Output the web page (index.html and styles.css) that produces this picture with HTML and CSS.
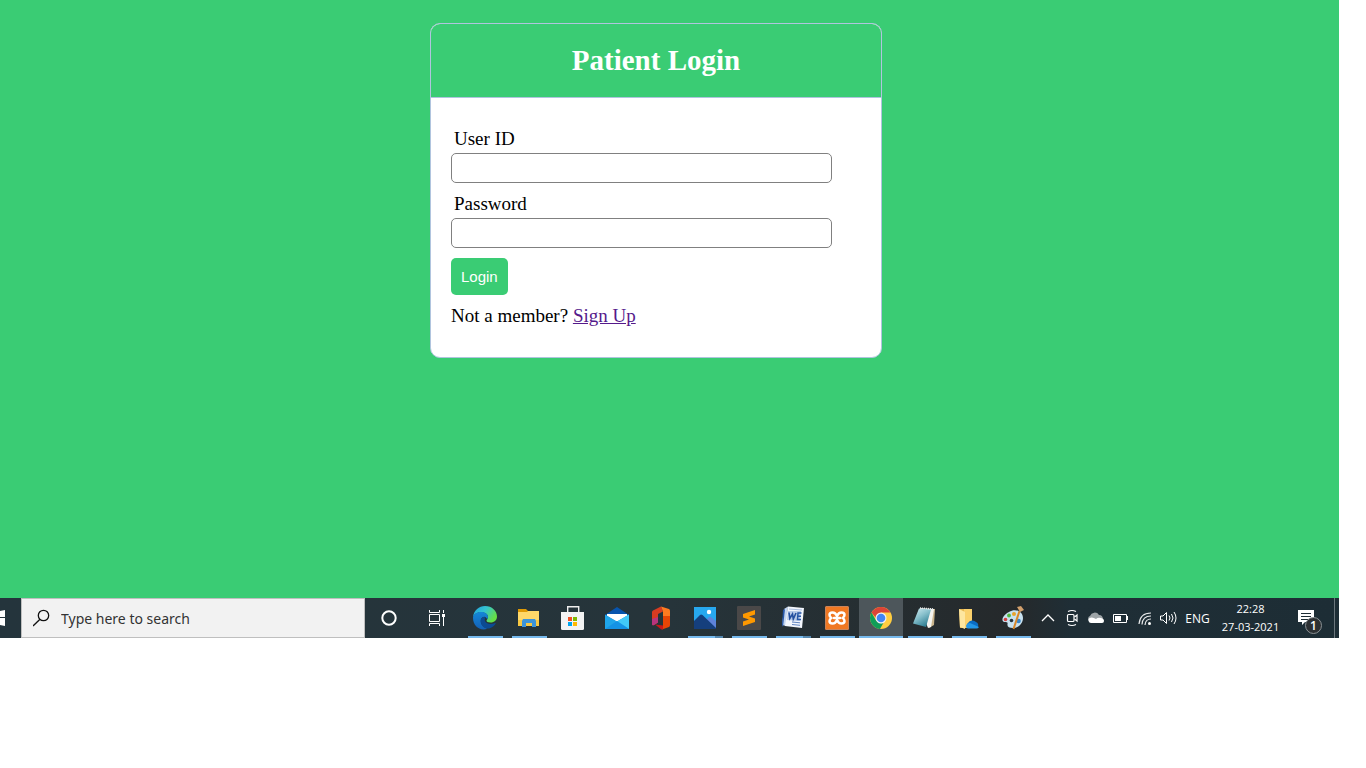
FILE: index.html
```html
<!DOCTYPE html>
<html lang="en">
<head>
<meta charset="utf-8">
<meta name="viewport" content="width=device-width, initial-scale=1">
<title>Patient Login</title>
<link rel="stylesheet" href="styles.css">
</head>
<body>
<div class="screen">
  <main class="page">
    <section class="card">
      <header class="card-header"><h1>Patient Login</h1></header>
      <form class="login-form">
        <div class="field">
          <label for="user-id">User ID</label>
          <input type="text" id="user-id" name="user-id">
        </div>
        <div class="field">
          <label for="password">Password</label>
          <input type="password" id="password" name="password">
        </div>
        <button class="login-button" type="submit">Login</button>
        <p class="signup">Not a member? <a href="#signup">Sign Up</a></p>
      </form>
    </section>
  </main>

  <footer class="taskbar">
    <button class="start" aria-label="Start">
      <svg width="21" height="40" viewBox="0 0 21 40"><path fill="#fff" d="M0 13l5-1v7H0zM0 20h5v8l-5-1z"/></svg>
    </button>
    <div class="search">
      <svg width="18" height="18" viewBox="0 0 18 18" fill="none" stroke="#111" stroke-width="1.3"><circle cx="10.500" cy="6.500" r="5.200"/><path d="M7 10.200L0 17"/></svg>
      <input type="text" aria-label="Search" placeholder="Type here to search">
    </div>
    <button class="shell" aria-label="Cortana">
      <svg width="24" height="24" viewBox="0 0 24 24"><circle cx="12" cy="12" r="6.700" fill="none" stroke="#fff" stroke-width="2"/></svg>
    </button>
    <button class="shell" aria-label="Task View">
      <svg width="24" height="24" viewBox="0 0 24 24" fill="none" stroke="#fff"><path d="M4.500 8.500h10v7h-10zM4.500 4v2.500h10V4M4.500 20v-2.500h10V20M18.500 4v3M18.500 11v9"/><path fill="#fff" stroke="none" d="M17 8h3v3h-3z"/></svg>
    </button>
    <nav class="apps" aria-label="Applications">
      <button class="app open" aria-label="Edge">
        <svg width="24" height="24" viewBox="0 0 24 24">
          <defs>
            <linearGradient id="edge-top" x1="0" y1="0" x2="1" y2=".5"><stop offset="0" stop-color="#1f9fe0"/><stop offset=".5" stop-color="#35c4d0"/><stop offset="1" stop-color="#66df45"/></linearGradient>
            <linearGradient id="edge-low" x1="0" y1="0" x2="0" y2="1"><stop offset="0" stop-color="#1487d8"/><stop offset="1" stop-color="#1460b5"/></linearGradient>
          </defs>
          <path fill="url(#edge-top)" d="M0 11C1 4 6 0 12 0c7 0 12 5 12 10.500 0 3.500-2.500 6-6.500 6-3 0-4-1-4-2 0-.8 1.500-1.400 1.500-3.500 0-3-3-4.800-7-4.800C4 6.200 1 8 0 11z"/>
          <path fill="url(#edge-low)" d="M0 12c0-3.500 3.500-6 8-6 4 0 7 2 7 5 0 1-.4 1.700-.9 2.300C13.500 11.500 12 10.500 10.500 11 7 12 7 16.500 9.500 19.500c1.200 1.500 3 2.700 5 3.200C7 25.500 0 20 0 12z"/>
          <path fill="#0c4a92" d="M9.800 11.200C6.500 13 7.500 18 10 20.500c2 2 5 2.700 7.500 1.500 2-.8 4-2.500 5.200-4.500.3-.5-.2-.8-.7-.5-4.500 2.300-9.500.5-10.200-2.500-.2-1.200.1-2 .7-2.700-.8-.8-1.800-1-2.700-.6z"/>
        </svg>
      </button>
      <button class="app open" aria-label="File Explorer">
        <svg width="24" height="24" viewBox="0 0 24 24"><path fill="#e09a05" d="M1 3h8l2 2h10v3H1z"/><path fill="#ffd869" d="M1 6h9l1-1h11v15H1z"/><path fill="#f8c842" d="M1 14h21v6H1z"/><path fill="#3c94d9" d="M5 15l1-2h12l1 2v6h-4v-4H9v4H5z"/></svg>
      </button>
      <button class="app" aria-label="Store">
        <svg width="24" height="24" viewBox="0 0 24 24"><path fill="none" stroke="#eee" stroke-width="1.400" d="M6.700 7V.8h11V7"/><path fill="#f3f3f3" d="M0 6h23v16.500q0 1.500-1.500 1.500h-20Q0 24 0 22.500z"/><path fill="#f25022" d="M7 11h4v4H7z"/><path fill="#7fba00" d="M12 11h4v4h-4z"/><path fill="#00a4ef" d="M7 16h4v4H7z"/><path fill="#ffb900" d="M12 16h4v4h-4z"/></svg>
      </button>
      <button class="app" aria-label="Mail">
        <svg width="24" height="24" viewBox="0 0 24 24"><path fill="#0754ad" d="M0 9L12 1l12 8v5H0z"/><path fill="#fff" d="M2 8h20v2l-10 6L2 10z"/><path fill="#1fa5ea" d="M0 8.500l12 7 12-7V23H0z"/><path fill="#41c9f7" d="M24 8.500V23L12 15.500z"/><path fill="#1593e5" d="M0 23l12-8 12 8z"/></svg>
      </button>
      <button class="app" aria-label="Office">
        <svg width="24" height="24" viewBox="0 0 24 24"><path fill="#d83b21" d="M3 6q0-1 1-1.600L12 .5l2 5L9 8v8.500L5 19q-2 1-2-1z"/><path fill="#b8347e" d="M3 13l6-2v5.500L5 19q-2 1-2-1z"/><path fill="#ff7a20" d="M12 .5L20 3q1 .5 1 2v7h-7V5.500z"/><path fill="#e84505" d="M14 10h7v9q0 1.500-1 2l-7 2.500 1-4z"/><path fill="#c91818" d="M6 18.500l8 1v3.800q-1 .4-2 0z"/></svg>
      </button>
      <button class="app open grouped" aria-label="Photos">
        <svg width="24" height="24" viewBox="0 0 24 24"><path fill="#27a8ef" d="M1 1h22v22H1z"/><path fill="#5e83da" d="M10 17l6-6q1-1 2 0l5 4v8H10z"/><path fill="#153f7d" d="M1 15l6-6q1-1 2.500 0L23 22v1H1z"/><circle cx="16" cy="6" r="2.200" fill="#fff"/></svg>
      </button>
      <button class="app open" aria-label="Sublime Text">
        <svg width="24" height="24" viewBox="0 0 24 24"><rect width="24" height="24" rx="1" fill="#4a4848"/><path fill="#ff9800" d="M6 8l12-4v4.500l-6 2 6 2V16L6 20v-4.500l6-2-6-2z"/></svg>
      </button>
      <button class="app open grouped" aria-label="Word">
        <svg width="24" height="24" viewBox="0 0 24 24"><path fill="#c3d5f0" d="M3 3L7 .5 5 20l-4-1z"/><path fill="#f3f7fd" d="M7 .5L23 2l-2 20L4 20z"/><path fill="#2858a8" d="M2 4l2-1-2 18-1-2z"/><path fill="#b9cbe8" d="M7 5h13l-1 10-13-1z"/><path fill="none" stroke="#2450a0" stroke-width="1.600" d="M8 6.500l.8 6 2.700-4.500.8 5L15 7"/><path fill="none" stroke="#2858a8" stroke-width="1.500" d="M20.500 7H17l-.5 6.500H20M17 10.300h3"/><path stroke="#5f84c0" d="M11 16l8 .8M11 18.500l8 .8"/><path stroke="#a9bee0" d="M8 3l13 1"/></svg>
      </button>
      <button class="app open" aria-label="XAMPP">
        <svg width="24" height="24" viewBox="0 0 24 24"><rect width="24" height="24" rx="1.500" fill="#f07822"/><rect x=".5" y=".5" width="23" height="23" rx="1.500" fill="none" stroke="#c9845a"/><path fill="none" stroke="#fff" stroke-width="2.500" stroke-linecap="round" stroke-linejoin="round" d="M12 10Q10.500 6.500 7.500 6.500 4.500 6.500 4.500 9q0 2 2 3-2 1-2 3 0 2.500 3 2.500 3 0 4.500-3.500 1.500 3.500 4.500 3.500t3-2.500q0-2-2-3 2-1 2-3 0-2.500-3-2.500-3 0-4.500 3.500zM9 12h6"/></svg>
      </button>
      <button class="app open active" aria-label="Chrome">
        <svg width="24" height="24" viewBox="0 0 24 24"><circle cx="12" cy="12" r="11" fill="#ffcd40"/><path fill="#db4437" d="M12 12H7L2.500 6.500A11 11 0 0 1 21.500 6.500H12z"/><path fill="#0f9d58" d="M2.500 6.500L7.200 14.700 12 17.500l2.500-.7L11 23A11 11 0 0 1 2.500 6.500z"/><circle cx="12" cy="12" r="5.500" fill="#f1f1f1"/><circle cx="12" cy="12" r="4.300" fill="#4285f4"/></svg>
      </button>
      <button class="app open" aria-label="Notepad">
        <svg width="24" height="24" viewBox="0 0 24 24"><defs><linearGradient id="note" x1="0" y1="0" x2=".6" y2="1"><stop offset="0" stop-color="#d3edf2"/><stop offset=".5" stop-color="#86bfcb"/><stop offset="1" stop-color="#2f7f93"/></linearGradient></defs><path fill="#c9b48c" d="M20 3h2l-1 16-5 3z"/><path fill="#f4f4f0" d="M7 2l14 1-3 18-3 1z"/><path fill="url(#note)" d="M6 2.500l12 1L13 21 0 17.500z"/><path stroke="#e3e8e8" stroke-width="1.500" stroke-dasharray="1 1" d="M7 2l14 1"/></svg>
      </button>
      <button class="app open" aria-label="OneDrive folder">
        <svg width="24" height="24" viewBox="0 0 24 24"><path fill="#e6b64f" d="M2 3h13v19H3z"/><path fill="#fbd16c" d="M7 3h8v19H7z"/><path fill="#fde6a0" d="M2 3l6 3v17l-5-2z"/><path fill="#0a6cc4" d="M11 22a3 3 0 0 1 0-5 5 5 0 0 1 8-1 3.500 3.500 0 0 1 1 6z"/><path fill="#2397e8" d="M9 20q1-3 4-3l9 4q-1 1.500-2.500 1.500H11Q9 22.500 9 20z"/></svg>
      </button>
      <button class="app open" aria-label="Paint">
        <svg width="24" height="24" viewBox="0 0 24 24"><path fill="#c8e1ef" d="M8 6c6-4 14-1 14 6 0 6-5 10-10 10-4 0-6-1-5.500-4 .5-2-1-2-3-2-4-.5-2-7 4.500-10z"/><circle cx="4.500" cy="13.500" r="1.800" fill="#d34040"/><circle cx="8" cy="9.500" r="1.900" fill="#50b840"/><circle cx="13" cy="8" r="2" fill="#e8a22c"/><circle cx="10.500" cy="14.500" r="1.800" fill="#26323b"/><circle cx="17.500" cy="15" r="2.300" fill="#3986ca"/><path stroke="#d88628" stroke-width="2" d="M18.500 5l-6 18"/><path fill="#d3a06c" d="M16 1l4-1 3 4-4 2z"/></svg>
      </button>
    </nav>
    <div class="tray">
      <button class="tray-icon" aria-label="Show hidden icons"><svg width="24" height="24" viewBox="0 0 24 24" fill="none" stroke="#fff" stroke-width="1.300"><path d="M6 15l6-6 6 6"/></svg></button>
      <button class="tray-icon" aria-label="Meet Now"><svg width="24" height="24" viewBox="0 0 24 24" fill="none" stroke="#fff" stroke-width="1.200"><rect x="7.500" y="8.500" width="6.500" height="7" rx="1"/><path d="M14.500 11l2.500-2v6l-2.500-2M8 5.500q4-2 8 0M8 18.500q4 2 8 0"/></svg></button>
      <button class="tray-icon" aria-label="OneDrive"><svg width="24" height="24" viewBox="0 0 24 24"><path fill="#9da4a7" d="M5 15a3 3 0 0 1 1-5 5 5 0 0 1 9-1q4 0 4 5z"/><path fill="#fff" d="M7 17a2.800 2.800 0 0 1-1.500-5q3-1.500 6.500 1 2-2 5-1 3 .5 3 3 0 2-2 2z"/></svg></button>
      <button class="tray-icon" aria-label="Battery"><svg width="24" height="24" viewBox="0 0 24 24"><path fill="none" stroke="#fff" d="M5.500 8.500h13v8h-13z"/><path fill="#fff" d="M7 10h6v5H7zM19 10h1v4h-1z"/></svg></button>
      <button class="tray-icon" aria-label="Wi-Fi"><svg width="24" height="24" viewBox="0 0 24 24" fill="none" stroke="#e8eaeb" stroke-width="1.200"><path d="M7 18Q8 7 19 7M10 18.500Q10.500 10 19 10M13 19q.5-6 6-6"/><circle cx="17.500" cy="17.500" r="1.500" fill="#fff" stroke="none"/></svg></button>
      <button class="tray-icon" aria-label="Volume"><svg width="24" height="24" viewBox="0 0 24 24" fill="none" stroke="#fff"><path d="M4.500 10v4H7l3.500 3.500v-11L7 10zM13 9.500q2 2.500 0 5M15.500 8q3 4 0 8M18 6q4 6 0 12"/></svg></button>
      <button class="language">ENG</button>
      <button class="clock"><time datetime="2021-03-27T22:28">22:28<br>27-03-2021</time></button>
      <button class="notifications" aria-label="Notifications">
        <svg width="24" height="28" viewBox="0 0 24 28"><path fill="#fff" d="M0 6h16v12H7l-3 3v-3H0z"/><path stroke="#1f2d35" d="M3 9.500h10M3 12.500h10M3 15.500h10"/></svg>
        <span class="badge">1</span>
      </button>
      <span class="show-desktop"></span>
    </div>
  </footer>
</div>
</body>
</html>
```
FILE: styles.css
```css
* {
  box-sizing: border-box;
}

body {
  margin: 0;
  background: #fff;
  font-family: "Liberation Serif", "Times New Roman", serif;
  font-size: 19px;
  color: #000;
}

button,
input {
  font: inherit;
}

/* Desktop area */
.screen {
  display: flex;
  flex-direction: column;
  min-height: calc(100vh - 130px);
  margin-right: 27px;
}

.page {
  flex: 1;
  padding: 23px 27px 40px 0;
  background: #3acc74;
}

/* Login card */
.card {
  width: 90%;
  max-width: 452px;
  margin: 0 auto;
  overflow: hidden;
  border: 1px solid #b0c4de;
  border-radius: 10px;
  background: #fff;
}

.card-header {
  padding: 20px;
  border-bottom: 1px solid #b0c4de;
  background: #3acc74;
  color: #fff;
  text-align: center;
}

.card-header h1 {
  margin: 0;
  font-size: 29px;
  line-height: 33px;
}

.login-form {
  padding: 30px 20px;
}

.field {
  display: flex;
  flex-direction: column;
  gap: 4px;
  margin-bottom: 10px;
}

.field label {
  padding-left: 3px;
  line-height: 21px;
}

.field input {
  width: 93%;
  height: 30px;
  padding: 5px 10px;
  border: 1px solid gray;
  border-radius: 5px;
  background: #fff;
  font-size: 16px;
}

.login-button {
  display: block;
  padding: 10px;
  border: 0;
  border-radius: 5px;
  background: #3acc74;
  color: #fff;
  font: 15px/17px "Liberation Sans", Arial, sans-serif;
}

.signup {
  margin: 10px 0 0;
  line-height: 22px;
}

.signup a {
  color: #551a8b;
}

/* Taskbar */
.taskbar {
  display: flex;
  height: 40px;
  background: linear-gradient(90deg, #24343c, #26343a 50%, #25292b 76%, #1f2e36 80%, #1d2d35);
  color: #fff;
  font-family: "Open Sans", "Noto Sans", sans-serif;
  font-size: 12px;
}

.taskbar button {
  display: flex;
  align-items: center;
  justify-content: center;
  flex: none;
  padding: 0;
  border: 0;
  background: none;
  color: inherit;
}

.start {
  width: 21px;
}

.search {
  display: flex;
  align-items: center;
  flex: 0 1 344px;
  gap: 10px;
  min-width: 0;
  padding: 0 11px;
  border: 1px solid #bfbfbf;
  background: #f2f2f2;
}

.search svg {
  flex: none;
}

.search input {
  flex: 1;
  min-width: 0;
  padding: 0;
  border: 0;
  background: none;
  font-family: "Noto Sans", sans-serif;
  font-size: 14px;
}

.search input::placeholder {
  color: #333;
}

.taskbar .shell {
  width: 48px;
}

.apps {
  display: flex;
  padding-left: 2px;
}

.taskbar .app {
  width: 44px;
}

.taskbar .open {
  background: linear-gradient(#76b9ed, #76b9ed) bottom / 35px 2px no-repeat;
}

.taskbar .grouped {
  background: linear-gradient(90deg, #76b9ed 27px, #5588af 27px) bottom / 35px 2px no-repeat;
}

.taskbar .active {
  background: linear-gradient(#76b9ed, #76b9ed) bottom / 100% 2px no-repeat #4d565b;
}

/* System tray */
.tray {
  display: flex;
  align-items: center;
  margin-left: auto;
}

.tray button {
  height: 40px;
}

.tray .tray-icon {
  width: 24px;
}

.tray .language {
  width: 35px;
}

.tray .clock {
  width: 71px;
  font-size: 11px;
  line-height: 18px;
  text-align: center;
}

.tray .notifications {
  position: relative;
  width: 48px;
}

.badge {
  position: absolute;
  right: 12px;
  bottom: 4px;
  width: 17px;
  height: 17px;
  border: 1px solid #8b9194;
  border-radius: 50%;
  background: #2c3033;
  font-size: 12px;
  font-weight: 600;
  line-height: 15px;
  text-align: center;
}

.show-desktop {
  width: 5px;
  height: 40px;
  border-left: 1px solid #6b767c;
}
```
